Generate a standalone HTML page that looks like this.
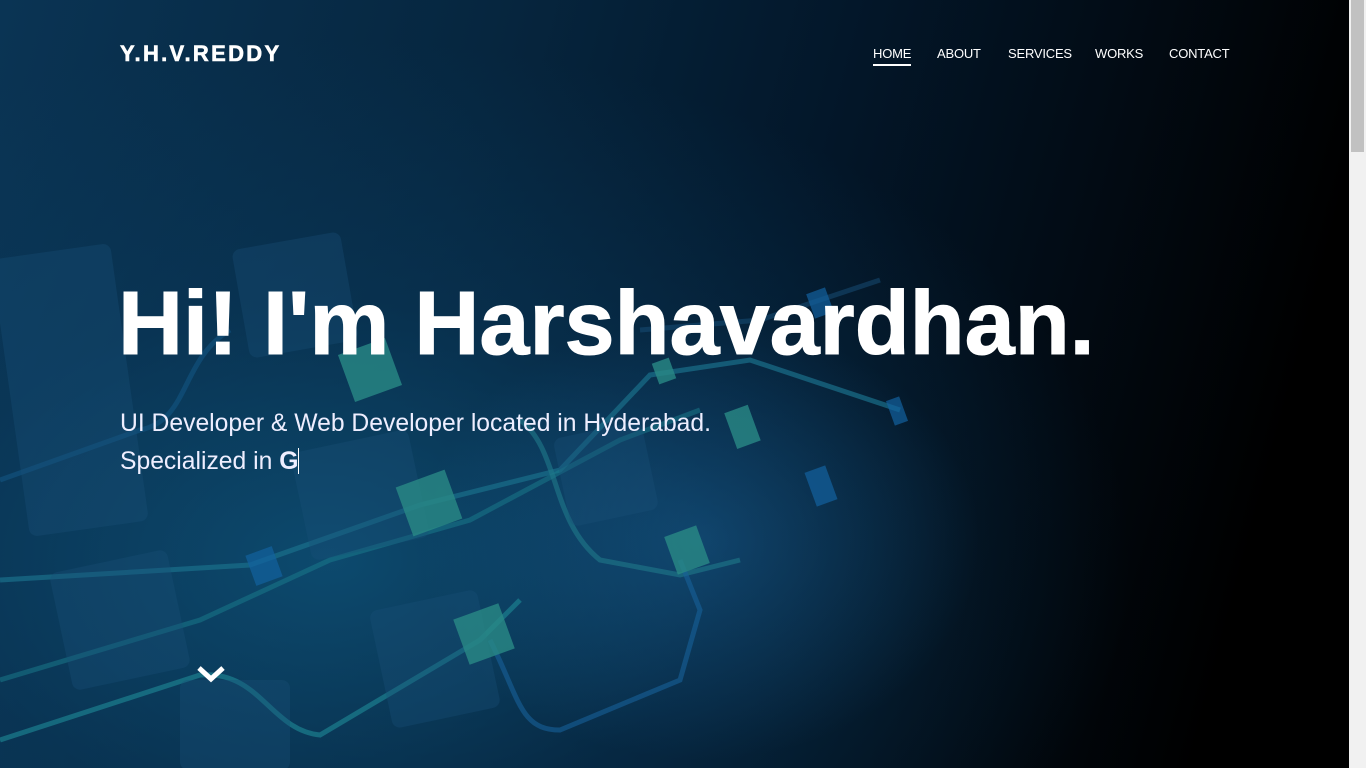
<!DOCTYPE html>
<html><head><meta charset="utf-8"><style>
*{margin:0;padding:0;box-sizing:border-box}
html,body{width:1366px;height:768px;overflow:hidden;background:#000;font-family:"Liberation Sans",sans-serif;color:#fff}
.hero{position:absolute;left:0;top:0;width:1349px;height:768px;overflow:hidden;
background:radial-gradient(ellipse 280px 220px at 700px 540px,rgba(30,110,170,.4) 0%,rgba(20,80,130,0) 100%),
radial-gradient(ellipse 800px 520px at 330px 560px,rgba(14,80,118,.85) 0%,rgba(10,60,95,.45) 50%,rgba(5,30,50,0) 100%),
linear-gradient(105deg,#0a3454 0%,#06263f 32%,#03172a 55%,#020c16 72%,#000 90%);}
svg.bg{position:absolute;left:0;top:0}
.logo{position:absolute;left:120px;top:41px;font-weight:900;font-size:22px;letter-spacing:2.3px;-webkit-text-stroke:.6px #fff}
nav{position:absolute;top:46px;left:873px;font-size:13px}
nav a{position:absolute;white-space:nowrap;color:#fff;text-decoration:none;letter-spacing:-.2px}
nav a.on:after{content:"";position:absolute;left:0;right:0;top:18px;height:2px;background:#fff}
h1{position:absolute;left:118px;top:273px;font-size:90px;font-weight:bold;white-space:nowrap;-webkit-text-stroke:1px #fff}
.sub{position:absolute;left:120px;top:405px;font-size:24.7px;line-height:38px;color:#eef}
.cur{display:inline-block;width:1px;height:26px;background:#fff;vertical-align:-5px}
.sb{position:absolute;left:1349px;top:0;width:17px;height:768px;background:#f1f1f1}
.sb div{position:absolute;left:2px;top:0;width:13px;height:152px;background:#c1c1c1}
</style></head><body>
<div class="hero">
<svg class="bg" width="1349" height="768" viewBox="0 0 1349 768">
<g fill="none" stroke-width="5">
<path d="M0 580 L250 565 L420 505 L560 470 L650 375 L750 360 L900 410" stroke="#1a6f8a" opacity=".7"/>
<path d="M0 680 L200 620 L330 560 L470 520 L620 440 L700 410" stroke="#1a7e8e" opacity=".5"/>
<path d="M0 740 L200 675 C260 670 270 730 320 735 L480 640 L520 600" stroke="#1b7f8e" opacity=".7"/>
<path d="M520 420 C560 450 550 520 600 560 L680 575 L740 560" stroke="#1f7a8a" opacity=".6"/>
<path d="M490 640 C520 700 520 730 560 730 L680 680 L700 610 L680 560" stroke="#17609a" opacity=".6"/>
<path d="M0 480 L140 430 C190 420 180 360 230 330" stroke="#135a8a" opacity=".5"/>
<path d="M640 330 L760 320 L880 280" stroke="#17507a" opacity=".5"/>
</g>
<g fill="#1a5078" opacity=".35">
<rect x="10" y="250" width="120" height="280" rx="8" transform="rotate(-8 70 390)"/>
<rect x="60" y="560" width="120" height="120" rx="8" transform="rotate(-12 120 620)"/>
<rect x="180" y="680" width="110" height="90" rx="8"/>
<rect x="240" y="240" width="110" height="110" rx="8" transform="rotate(-10 295 295)"/>
<rect x="300" y="440" width="120" height="110" rx="8" transform="rotate(-12 360 495)"/>
<rect x="380" y="600" width="110" height="120" rx="8" transform="rotate(-12 430 660)"/>
<rect x="560" y="430" width="90" height="90" rx="8" transform="rotate(-12 600 470)"/>
</g>
<g fill="#2a8a86" opacity=".8">
<rect x="345" y="345" width="50" height="50" transform="rotate(-20 370 370)"/>
<rect x="403" y="477" width="52" height="52" transform="rotate(-20 429 503)"/>
<rect x="460" y="610" width="48" height="48" transform="rotate(-20 484 634)"/>
<rect x="670" y="530" width="34" height="40" transform="rotate(-20 687 550)"/>
<rect x="730" y="408" width="25" height="38" transform="rotate(-20 742 427)"/>
<rect x="655" y="360" width="18" height="22" transform="rotate(-20 664 371)"/>
</g>
<g fill="#1462a0" opacity=".7">
<rect x="250" y="550" width="28" height="32" transform="rotate(-20 264 566)"/>
<rect x="810" y="468" width="22" height="36" transform="rotate(-20 821 486)"/>
<rect x="890" y="398" width="14" height="26" transform="rotate(-20 897 411)"/>
<rect x="810" y="290" width="20" height="26" transform="rotate(-20 820 303)"/>
</g>
</svg>
<div class="logo">Y.H.V.REDDY</div>
<nav>
<a class="on" style="left:0">HOME</a>
<a style="left:64px">ABOUT</a>
<a style="left:135px">SERVICES</a>
<a style="left:222px">WORKS</a>
<a style="left:296px">CONTACT</a>
</nav>
<h1>Hi! I'm Harshavardhan.</h1>
<div class="sub">UI Developer &amp; Web Developer located in Hyderabad.<br>Specialized in <b>G</b><span class="cur"></span></div>
<svg style="position:absolute;left:196px;top:663px" width="30" height="22" viewBox="0 0 30 22"><path d="M3 5 L15 16 L27 5" fill="none" stroke="#fff" stroke-width="5"/></svg>
</div>
<div class="sb"><div></div></div>
</body></html>
